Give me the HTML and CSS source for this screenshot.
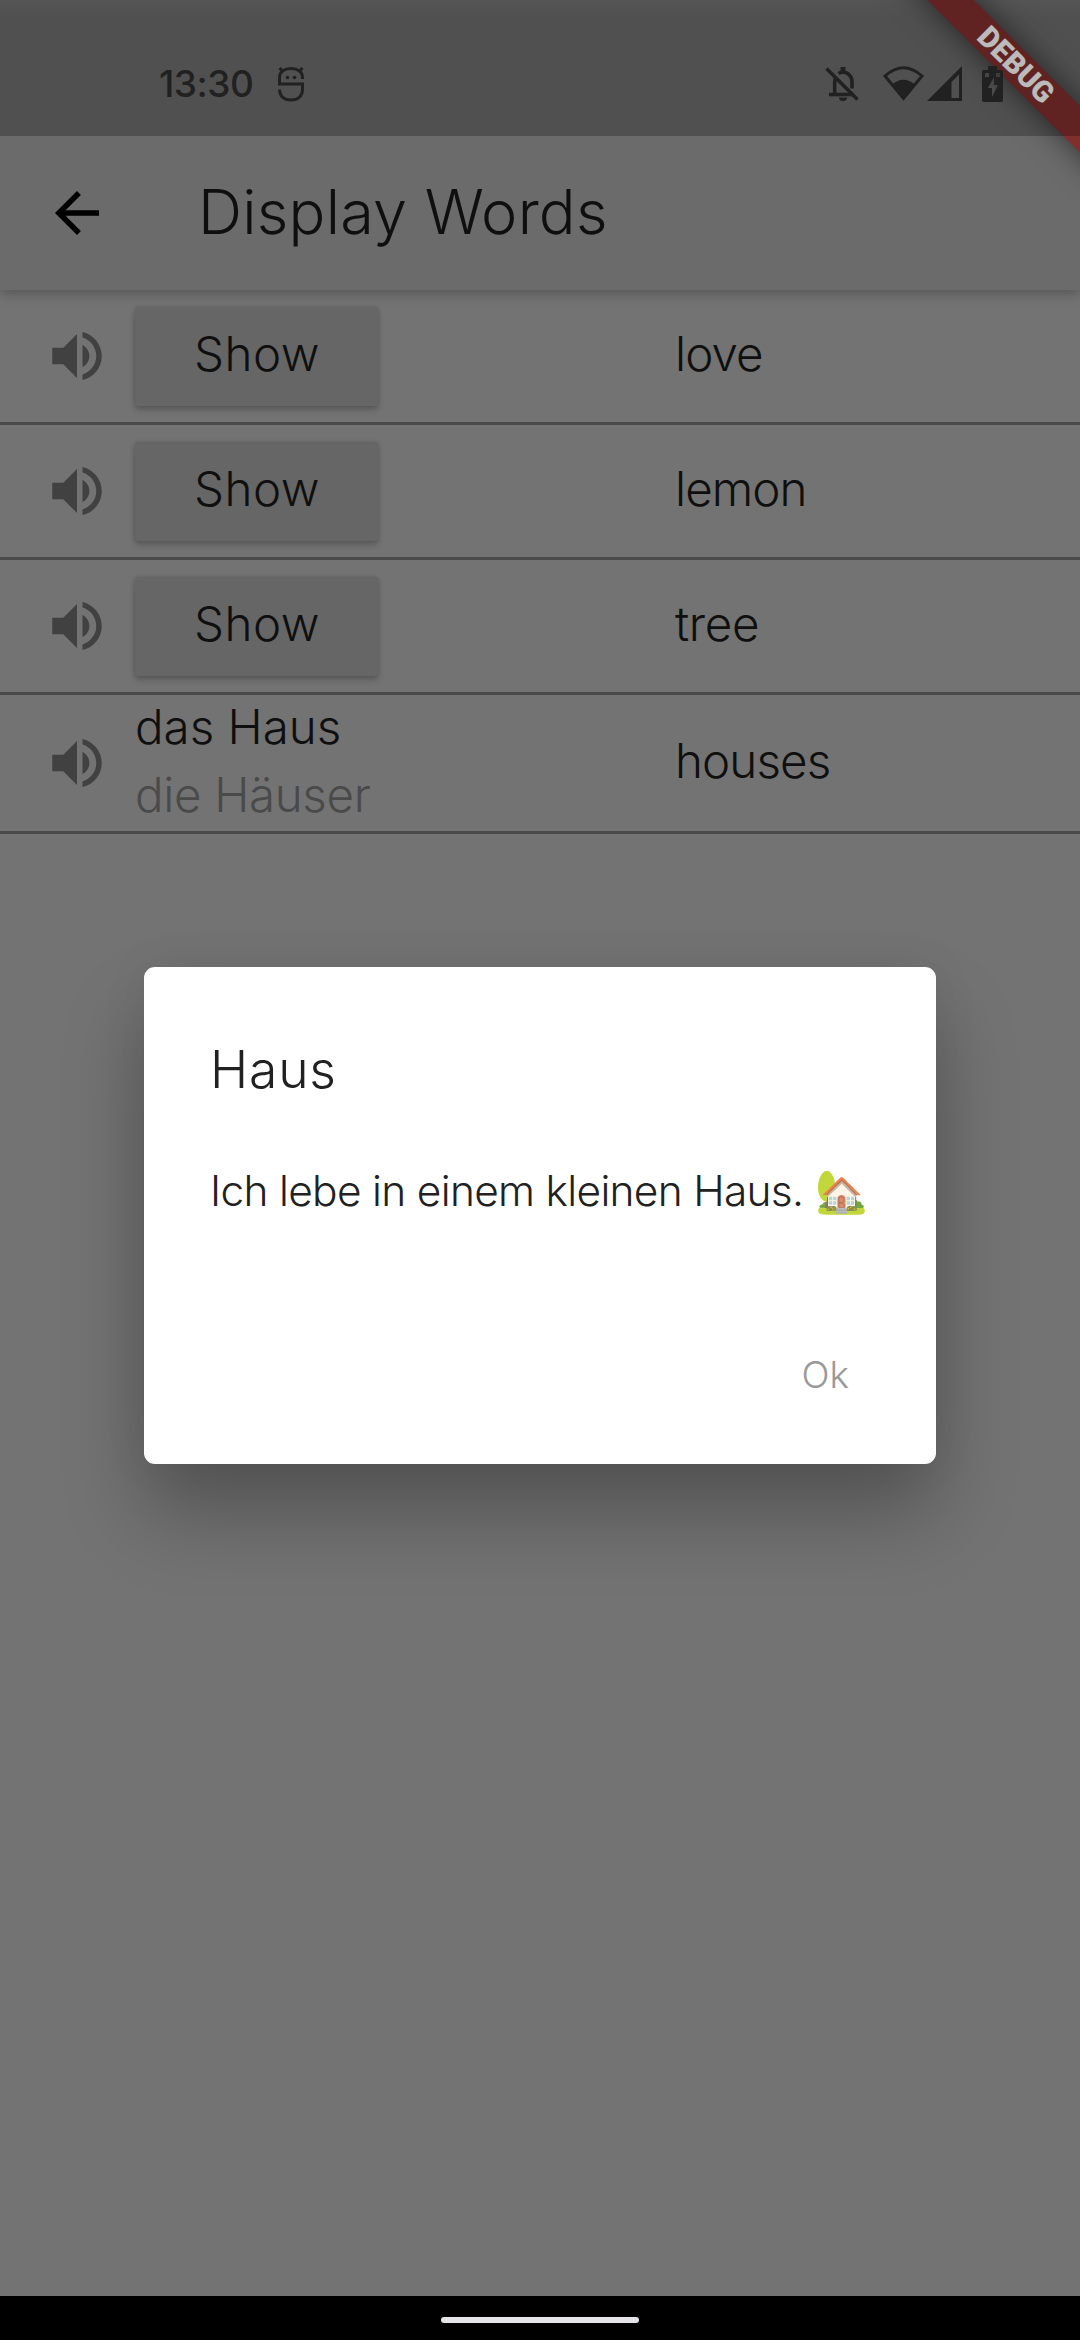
FILE: index.html
```
<!DOCTYPE html>
<html lang="de">
<head>
<meta charset="utf-8">
<title>Display Words</title>
<link rel="stylesheet" href="styles.css">
</head>
<body>
<svg class="sprite" aria-hidden="true">
  <symbol id="volume" viewBox="0 0 24 24"><path d="M3 9v6h4l5 5V4L7 9H3zm13.500 3c0-1.770-1.020-3.290-2.500-4.030v8.050c1.480-.730 2.500-2.250 2.500-4.020zM14 3.230v2.060c2.890.860 5 3.540 5 6.710s-2.110 5.850-5 6.710v2.060c4.010-.910 7-4.490 7-8.770s-2.990-7.860-7-8.770z"/></symbol>
</svg>
<div class="screen">
  <header class="status">
    <div class="status-left">
      <span class="time">13:30</span>
      <svg class="droid" viewBox="0 0 26 36" fill="none" stroke="#212121" stroke-width="3">
        <path d="M24.500 13v-1C24.500 5.500 19.500 2.500 13 2.500S1.500 5.500 1.500 12v6h23v5.500C24.500 30 20 34 13 34S1.500 30 1.500 23.500"/>
        <path d="M1.500 2l4 4M24.500 2l-4 4"/>
        <circle cx="9.500" cy="11.500" r="1.800" fill="#212121" stroke="none"/><circle cx="16.500" cy="11.500" r="1.800" fill="#212121" stroke="none"/>
      </svg>
    </div>
    <div class="status-right">
      <svg class="bell" viewBox="0 0 34 36" fill="none" stroke="#212121" stroke-width="3.600">
        <path d="M1.500 2.500L32.500 33.500"/>
        <path d="M4 28.500h24"/><path d="M9.700 28V16q0-3 1.500-5"/><path d="M13.500 7.500q2-1.200 4.500-1.200c5 0 9 4 9 9.200v7"/>
        <path d="M18 1v5" stroke-width="5"/><path d="M14 31.500h8q0 3.500-4 3.500t-4-3.500z" fill="#212121" stroke="none"/>
      </svg>
      <svg class="wifi" viewBox="0 0 41 35">
        <path d="M2 10Q20.500-6.500 39 10L20.500 32.500z" fill="none" stroke="#212121" stroke-width="3"/>
        <path d="M9 18.500q11.500-9.500 23 0L20.500 34z" fill="#212121"/>
      </svg>
      <svg class="signal" viewBox="0 0 35 35"><path d="M35 0v35H0zM32 8.500L24.500 16v16H32z" fill="#212121" fill-rule="evenodd"/></svg>
      <svg class="battery" viewBox="0 0 21 36"><path d="M6 0h9v4h4q2 0 2 2v28q0 2-2 2H2q-2 0-2-2V6q0-2 2-2h4zM3 7v4h4V7zM14 7v4h4V7zM12 11L6 22h4v9l6-12h-4z" fill="#212121" fill-rule="evenodd"/></svg>
    </div>
  </header>
  <div class="appbar">
    <svg class="back" viewBox="0 0 24 24"><path d="M20 11H7.830l5.590-5.590L12 4l-8 8 8 8 1.410-1.410L7.830 13H20v-2z"/></svg>
    <h1 class="title">Display Words</h1>
  </div>
  <main class="list">
    <div class="row">
      <svg class="speaker"><use href="#volume"/></svg>
      <div class="word"><button class="show">Show</button></div>
      <span class="meaning">love</span>
    </div>
    <div class="row">
      <svg class="speaker"><use href="#volume"/></svg>
      <div class="word"><button class="show">Show</button></div>
      <span class="meaning">lemon</span>
    </div>
    <div class="row">
      <svg class="speaker"><use href="#volume"/></svg>
      <div class="word"><button class="show">Show</button></div>
      <span class="meaning tree">tree</span>
    </div>
    <div class="row row-tall">
      <svg class="speaker"><use href="#volume"/></svg>
      <div class="word forms"><span class="singular">das Haus</span><span class="plural">die Häuser</span></div>
      <span class="meaning">houses</span>
    </div>
  </main>
  <nav class="navbar"><span class="pill"></span></nav>

  <div class="banner-clip"><div class="banner">DEBUG</div></div>

  <section class="dialog">
    <h2 class="dialog-title">Haus</h2>
    <p class="dialog-text">Ich lebe in einem kleinen Haus. <span class="emoji">🏡</span></p>
    <div class="actions"><button class="ok">Ok</button></div>
  </section>
</div>
</body>
</html>
```
FILE: styles.css
```
* { box-sizing: border-box; margin: 0; padding: 0; }
body { background: #737373; font-family: Inter, "Noto Sans", sans-serif; font-weight: 300; }
button { border: 0; background: none; font: inherit; color: inherit; }
.sprite { position: absolute; width: 0; height: 0; }
.screen { position: relative; width: 1080px; height: 2340px; overflow: hidden; display: flex; flex-direction: column; background: #737373; }

.status { position: relative; z-index: 5; height: 136px; padding: 31px 77px 0 159px; display: flex; align-items: center; justify-content: space-between; background: rgba(0,0,0,.25); }
.status-left, .status-right { display: flex; align-items: center; }
.time { font: 500 37px/44px Inter, sans-serif; letter-spacing: -.5px; color: #212121; }
.droid { width: 26px; height: 36px; margin-left: 25px; }
.bell { width: 34px; height: 36px; }
.wifi { width: 41px; height: 35px; margin-left: 24px; }
.signal { width: 35px; height: 35px; margin-left: 3px; }
.battery { width: 21px; height: 36px; margin-left: 20px; }

.appbar { position: relative; z-index: 2; height: 290px; margin-top: -136px; padding: 136px 0 0 44px; display: flex; align-items: center; background: linear-gradient(#717171, #6b6b6b 18px); box-shadow: 0 3px 12px rgba(0,0,0,.28); }
.back { width: 66px; height: 66px; }
.title { margin-left: 88px; padding-bottom: 3px; font-size: 61.200px; line-height: 76px; font-weight: 300; letter-spacing: .250px; color: #0f0f0f; }

.list { flex: 1; }
.row { display: grid; grid-template-columns: 91px 540px 1fr; grid-template-rows: 132px; align-items: center; height: 135px; padding-left: 44px; border-bottom: 3px solid #4a4a4a; font-size: 47.500px; line-height: 68px; color: #0f0f0f; }
.row-tall { height: 139px; grid-template-rows: 136px; }
.speaker { width: 66px; height: 66px; fill: #414141; }
.show { display: block; width: 243px; height: 99px; padding: 0 0 5px 1px; border-radius: 3px; background: #666; box-shadow: 0 4px 6px rgba(0,0,0,.2), 0 0 4px rgba(0,0,0,.12); letter-spacing: .500px; }
.meaning { padding-bottom: 5px; letter-spacing: -.9px; }
.tree { letter-spacing: -.3px; }
.forms { display: flex; flex-direction: column; margin-top: -5px; }
.plural { letter-spacing: -.350px; color: #4a4a4a; }

.navbar { height: 44px; display: flex; justify-content: center; align-items: center; background: #000; }
.pill { width: 198px; height: 6px; border-radius: 3px; background: #e7e4e9; margin-bottom: -4px; }

.banner-clip { position: absolute; z-index: 4; top: 0; right: 0; width: 240px; height: 240px; overflow: hidden; }
.banner { position: absolute; left: 30px; top: 48px; width: 290px; height: 33px; transform: rotate(45deg); background: #802f2d; color: #fafafa; box-shadow: 0 0 30px rgba(0,0,0,.55); text-align: center; font: 900 29.500px/33px Roboto, sans-serif; padding-left: 2px; }

.dialog { position: absolute; z-index: 6; left: 144px; top: 967px; width: 792px; height: 497px; padding: 66px 87px 0 66px; border-radius: 11px; background: #fff; color: #212121; box-shadow: 0 50px 80px rgba(0,0,0,.27), 0 0 50px rgba(0,0,0,.06); }
.dialog-title { font-size: 51.600px; line-height: 72px; font-weight: 300; letter-spacing: .8px; }
.dialog-text { margin: 56px -60px 0 0; font-size: 42.400px; line-height: 60px; letter-spacing: -.680px; white-space: nowrap; }
.emoji { opacity: .85; }
.actions { display: flex; justify-content: flex-end; margin-top: 132px; }
.ok { font-size: 36.900px; line-height: 44px; color: #999; }
```
